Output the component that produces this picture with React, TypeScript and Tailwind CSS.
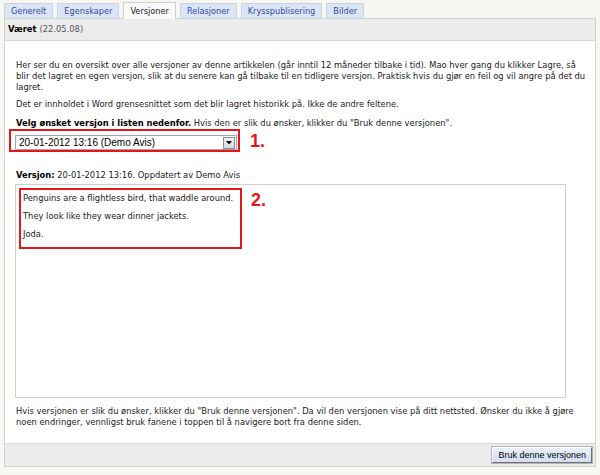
import * as React from "react";

const TABS = ["Generelt", "Egenskaper", "Versjoner", "Relasjoner", "Krysspublisering", "Bilder"];
const ACTIVE = "Versjoner";

function Tab({ label }: { label: string }) {
  if (label === ACTIVE) {
    return (
      <div className="relative z-10 -mb-[1px] flex h-[17px] items-center border border-b-0 border-[#cfcfcf] bg-[#f9f9f9] px-[6px] text-[#222]">
        {label}
      </div>
    );
  }
  return (
    <div className="flex h-[15px] items-center border border-b-0 border-[#c9d3e6] bg-[#dce5f5] px-[6px] text-[#2d4c9e]">
      {label}
    </div>
  );
}

function VersionSelect() {
  return (
    <div className="flex h-[15px] w-[222px] items-center justify-between border border-[#a7a7a7] bg-white pl-[3px] pr-[1px] font-['Liberation_Sans',Arial,sans-serif] text-[10px] leading-none text-black">
      <span>20-01-2012 13:16 (Demo Avis)</span>
      <span className="flex h-[12px] w-[12px] items-center justify-center border border-[#8d8d8d] bg-gradient-to-b from-[#f4f4f4] to-[#d9d9d9]">
        <svg width="6" height="4" viewBox="0 0 6 4" aria-hidden="true">
          <polygon points="0,0 6,0 3,3.5" fill="#000" />
        </svg>
      </span>
    </div>
  );
}

export default function App() {
  return (
    <div className="h-[475px] w-[600px] overflow-hidden bg-[#f7f6f1] px-[4px] pt-[2px] font-['DejaVu_Sans',Verdana,sans-serif] text-[8.35px] leading-[11px] text-[#222]">
      {/* tabs */}
      <div className="flex h-[16px] items-end gap-[4px] text-[8.2px]">
        {TABS.map((t) => (
          <Tab key={t} label={t} />
        ))}
      </div>

      <div className="border border-[#d2d2d2] bg-white">
        <div className="flex h-[22px] items-center border-b border-[#d6d6d6] bg-[#ececec] px-[3px]">
          <b className="text-black">Været</b>
          <span className="ml-[3px] text-[#555]">(22.05.08)</span>
        </div>

        <div className="pl-[11px] pr-[9px] pt-[19px] pb-[15px]">
          <p className="mb-[6px]">
            Her ser du en oversikt over alle versjoner av denne artikkelen (går inntil 12 måneder tilbake i tid). Mao hver
            gang du klikker Lagre, så blir det lagret en egen versjon, slik at du senere kan gå tilbake til en tidligere
            versjon. Praktisk hvis du gjør en feil og vil angre på det du lagret.
          </p>
          <p className="mb-[8px]">
            Det er innholdet i Word grensesnittet som det blir lagret historikk på. Ikke de andre feltene.
          </p>
          <p>
            <b className="text-black">Velg ønsket versjon i listen nedenfor.</b> Hvis den er slik du ønsker, klikker du
            "Bruk denne versjonen".
          </p>

          <div className="-ml-[7px] flex items-center">
            <div className="border-2 border-[#e4161b] pt-[4px] pl-[4px] pr-[1px]">
              <VersionSelect />
            </div>
            <span className="ml-[10px] font-['Liberation_Sans',Arial,sans-serif] text-[18px] leading-[18px] font-bold text-[#e4161b]">
              1.
            </span>
          </div>

          <p className="mt-[18px]">
            <b className="text-black">Versjon:</b> 20-01-2012 13:16. Oppdatert av Demo Avis
          </p>

          <div className="-ml-[1px] mt-[3px] flex h-[214px] w-[551px] items-start border border-[#cfcfcf] p-[3px]">
            <div className="h-[61px] w-[223px] border-2 border-[#e4161b] pl-[2px] pt-[3px]">
              <p className="mb-[7px]">Penguins are a flightless bird, that waddle around.</p>
              <p className="mb-[7px]">They look like they wear dinner jackets.</p>
              <p>Joda.</p>
            </div>
            <span className="ml-[9px] mt-[3px] font-['Liberation_Sans',Arial,sans-serif] text-[18px] leading-[18px] font-bold text-[#e4161b]">
              2.
            </span>
          </div>

          <p className="mt-[8px]">
            Hvis versjonen er slik du ønsker, klikker du "Bruk denne versjonen". Da vil den versjonen vise på ditt
            nettsted. Ønsker du ikke å gjøre noen endringer, vennligst bruk fanene i toppen til å navigere bort fra denne
            siden.
          </p>
        </div>

        <div className="flex h-[23px] items-center justify-end border-t border-[#d6d6d6] bg-[#ececec] pr-[3px]">
          <button className="h-[16px] border border-t-white border-l-white border-r-[#6f6f6f] border-b-[#6f6f6f] bg-gradient-to-b from-[#eaf0fa] to-[#d2def2] px-[5px] font-['Liberation_Sans',Arial,sans-serif] text-[9px] leading-none text-black shadow-[0_0_0_1px_#b5b5b5]">
            Bruk denne versjonen
          </button>
        </div>
      </div>
    </div>
  );
}
